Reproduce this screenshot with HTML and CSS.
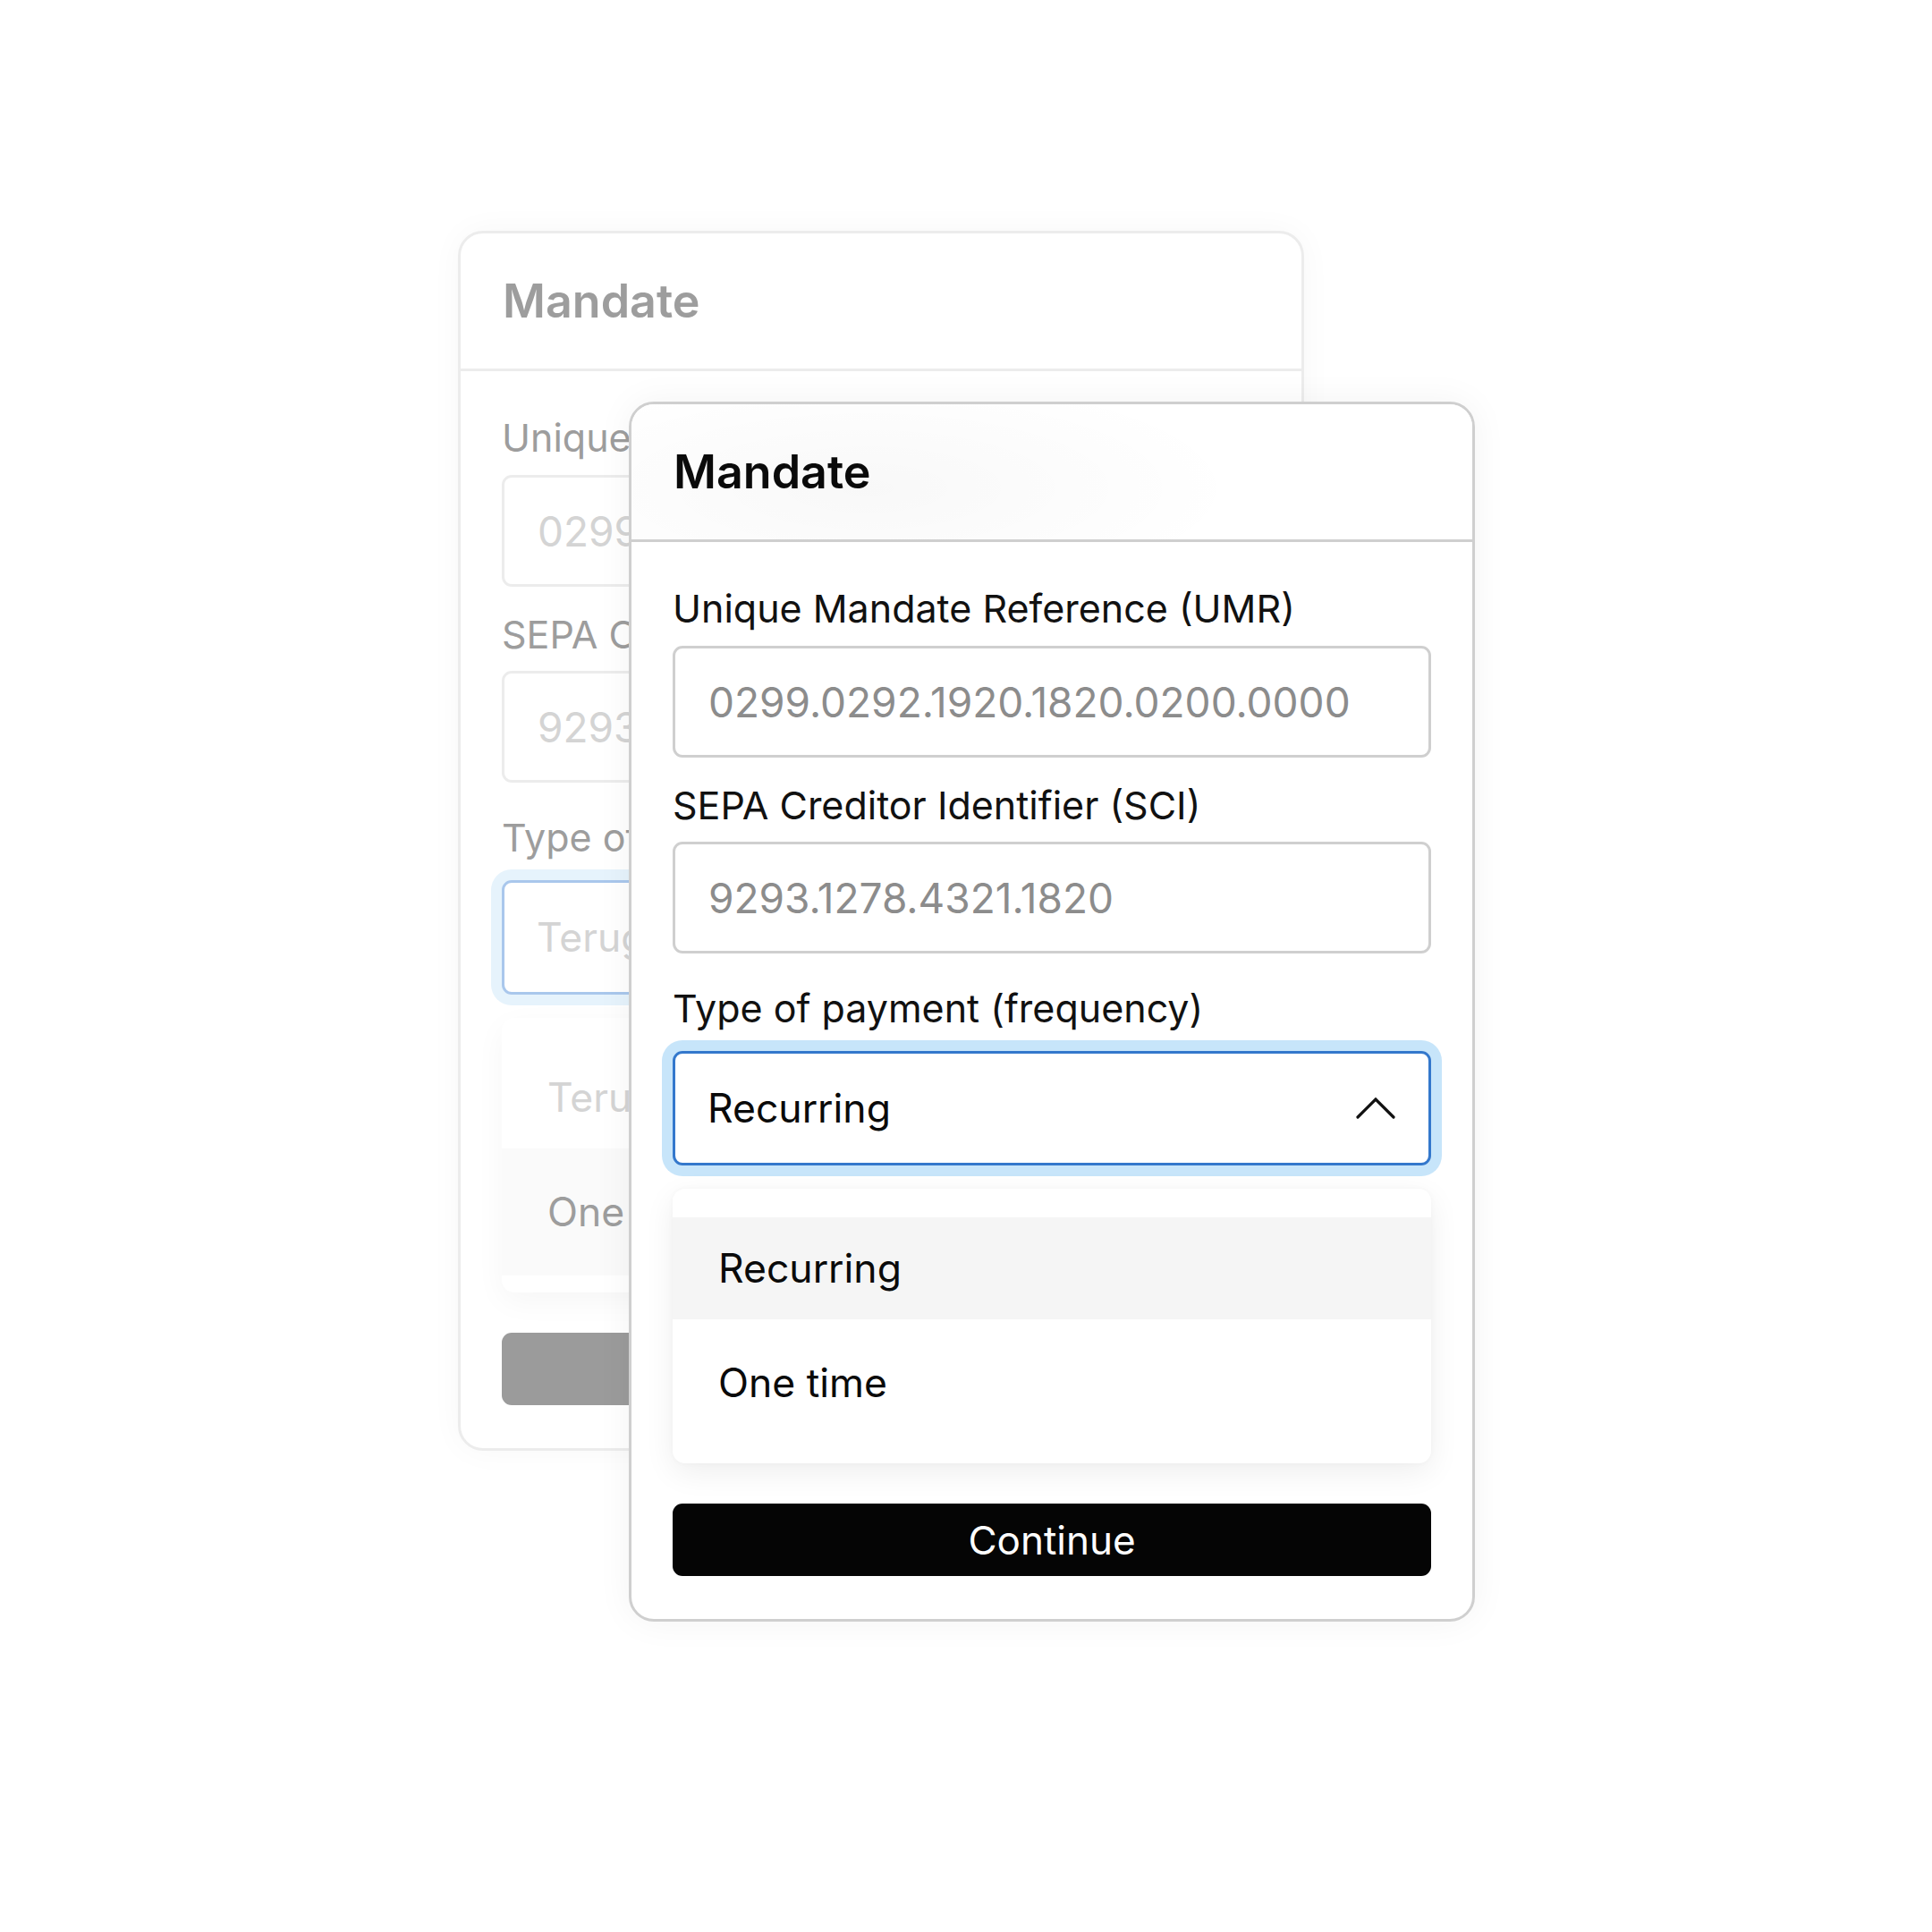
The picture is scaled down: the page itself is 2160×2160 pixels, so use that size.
FILE: index.html
```html
<!DOCTYPE html>
<html lang="en">
<head>
<meta charset="utf-8">
<title>Mandate</title>
<link rel="stylesheet" href="styles.css">
</head>
<body>
<div class="stage">
  <div class="stack">
    <section class="card card--back" aria-hidden="true">
      <header class="card-head"><h2 class="card-title">Mandate</h2></header>
      <div class="card-body">
        <div class="field">
          <span class="field-label">Unique</span>
          <div class="input">0299.0292</div>
        </div>
        <div class="field field--second">
          <span class="field-label">SEPA Creditor</span>
          <div class="input">9293.1278</div>
        </div>
        <div class="field field--select">
          <span class="field-label">Type of</span>
          <div class="select"><span class="select-value select-value--placeholder">Terugkerend</span></div>
        </div>
        <ul class="menu">
          <li class="menu-item menu-item--muted">Terugkerend</li>
          <li class="menu-item menu-item--active menu-item--last">One time</li>
        </ul>
        <div class="button button--muted"></div>
      </div>
    </section>

    <section class="card card--front">
      <header class="card-head"><h2 class="card-title">Mandate</h2></header>
      <div class="card-body">
        <div class="field">
          <label class="field-label">Unique Mandate Reference (UMR)</label>
          <div class="input">0299.0292.1920.1820.0200.0000</div>
        </div>
        <div class="field field--second">
          <label class="field-label">SEPA Creditor Identifier (SCI)</label>
          <div class="input">9293.1278.4321.1820</div>
        </div>
        <div class="field field--select">
          <label class="field-label">Type of payment (frequency)</label>
          <div class="select">
            <span class="select-value">Recurring</span>
            <svg class="chevron" width="44" height="24" viewBox="0 0 44 24" aria-hidden="true">
              <polyline points="2,22 22,2 42,22" fill="none" stroke="#111" stroke-width="3.2" stroke-linecap="round" stroke-linejoin="miter"/>
            </svg>
          </div>
        </div>
        <ul class="menu">
          <li class="menu-item menu-item--active">Recurring</li>
          <li class="menu-item menu-item--last">One time</li>
        </ul>
        <button class="button" type="button">Continue</button>
      </div>
    </section>
  </div>
</div>
</body>
</html>
```

FILE: styles.css
```css
html, body {
  margin: 0;
  padding: 0;
  background: #ffffff;
}

body {
  width: 2160px;
  height: 2160px;
  font-family: Inter, "Liberation Sans", Arial, sans-serif;
  color: #111111;
}

.stage {
  padding: 258px 0 0 512px;
}

.stack {
  display: grid;
  width: 1137px;
}

.card {
  grid-area: 1 / 1;
  width: 946px;
  height: 1364px;
  box-sizing: border-box;
  border: 3px solid #cfcfcf;
  border-radius: 28px;
  display: flex;
  flex-direction: column;
  overflow: hidden;
  background: #ffffff;
}

.card--front {
  margin: 191px 0 0 191px;
  box-shadow: 0 0 40px rgba(0, 0, 0, 0.05);
}

.card-head {
  height: 151px;
  flex: none;
  border-bottom: 3px solid #cfcfcf;
  padding: 0 47px;
  display: flex;
  align-items: center;
}

.card--front .card-head {
  background:
    radial-gradient(ellipse 420px 130px at 28% 62%, rgba(0, 0, 0, 0.028), rgba(0, 0, 0, 0) 100%),
    #ffffff;
}

.card-title {
  margin: 0;
  font-size: 52px;
  font-weight: 600;
  color: #0a0a0a;
}

.card-body {
  flex: 1;
  padding: 49px 46px 0;
  display: flex;
  flex-direction: column;
}

.field {
  display: flex;
  flex-direction: column;
  gap: 17px;
}

.field--second {
  margin-top: 28px;
  gap: 16px;
}

.field--select {
  margin-top: 36px;
  gap: 23px;
}

.field-label {
  display: block;
  font-size: 43px;
  line-height: 50px;
  font-weight: 400;
  color: #111111;
  white-space: nowrap;
}

.input {
  height: 125px;
  box-sizing: border-box;
  border: 3px solid #cfcfcf;
  border-radius: 11px;
  padding: 0 37px;
  display: flex;
  align-items: center;
  font-size: 46px;
  color: #8c8c8c;
  white-space: nowrap;
}

.select {
  height: 128px;
  box-sizing: border-box;
  border: 3px solid #3478cc;
  border-radius: 11px;
  box-shadow: 0 0 0 12px #c7e5fa;
  padding: 0 37px 0 36px;
  display: flex;
  align-items: center;
  justify-content: space-between;
  font-size: 44.5px;
  color: #0a0a0a;
  background: #ffffff;
}

.chevron {
  display: block;
  flex: none;
}

.menu {
  list-style: none;
  margin: 26px 0 0;
  padding: 32px 0 19px;
  border-radius: 14px;
  background: #ffffff;
  box-shadow: 0 10px 34px rgba(0, 0, 0, 0.07), 0 0 6px rgba(0, 0, 0, 0.03);
}

.menu-item {
  height: 114px;
  padding: 0 51px;
  display: flex;
  align-items: center;
  font-size: 44.5px;
  color: #0a0a0a;
  white-space: nowrap;
}

.menu-item--last {
  height: 142px;
}

.menu-item--active {
  background: #f5f5f5;
}

.button {
  margin-top: 45px;
  height: 81px;
  border: 0;
  border-radius: 11px;
  background: #050505;
  color: #ffffff;
  font-family: inherit;
  font-size: 44px;
  font-weight: 400;
  padding: 0;
  width: 100%;
  flex: none;
}

/* Back (faded) card */
.card--back {
  border-color: #ececec;
  box-shadow: 0 0 36px rgba(0, 0, 0, 0.035);
}

.card--back .card-head {
  border-bottom-color: #ececec;
}

.card--back .card-title {
  color: #9d9d9d;
}

.card--back .field-label {
  color: #9d9d9d;
}

.card--back .input {
  border-color: #ececec;
  color: #d4d4d4;
}

.card--back .select {
  border-color: #a9c7ec;
  box-shadow: 0 0 0 12px #e6f3fc;
}

.card--back .select-value--placeholder {
  color: #d4d4d4;
}

.card--back .menu {
  box-shadow: 0 10px 34px rgba(0, 0, 0, 0.04);
}

.card--back .menu-item {
  color: #9d9d9d;
}

.card--back .menu-item--muted {
  color: #d4d4d4;
}

.card--back .menu-item--active {
  background: #fafafa;
}

.button--muted {
  background: #9b9b9b;
}
```
